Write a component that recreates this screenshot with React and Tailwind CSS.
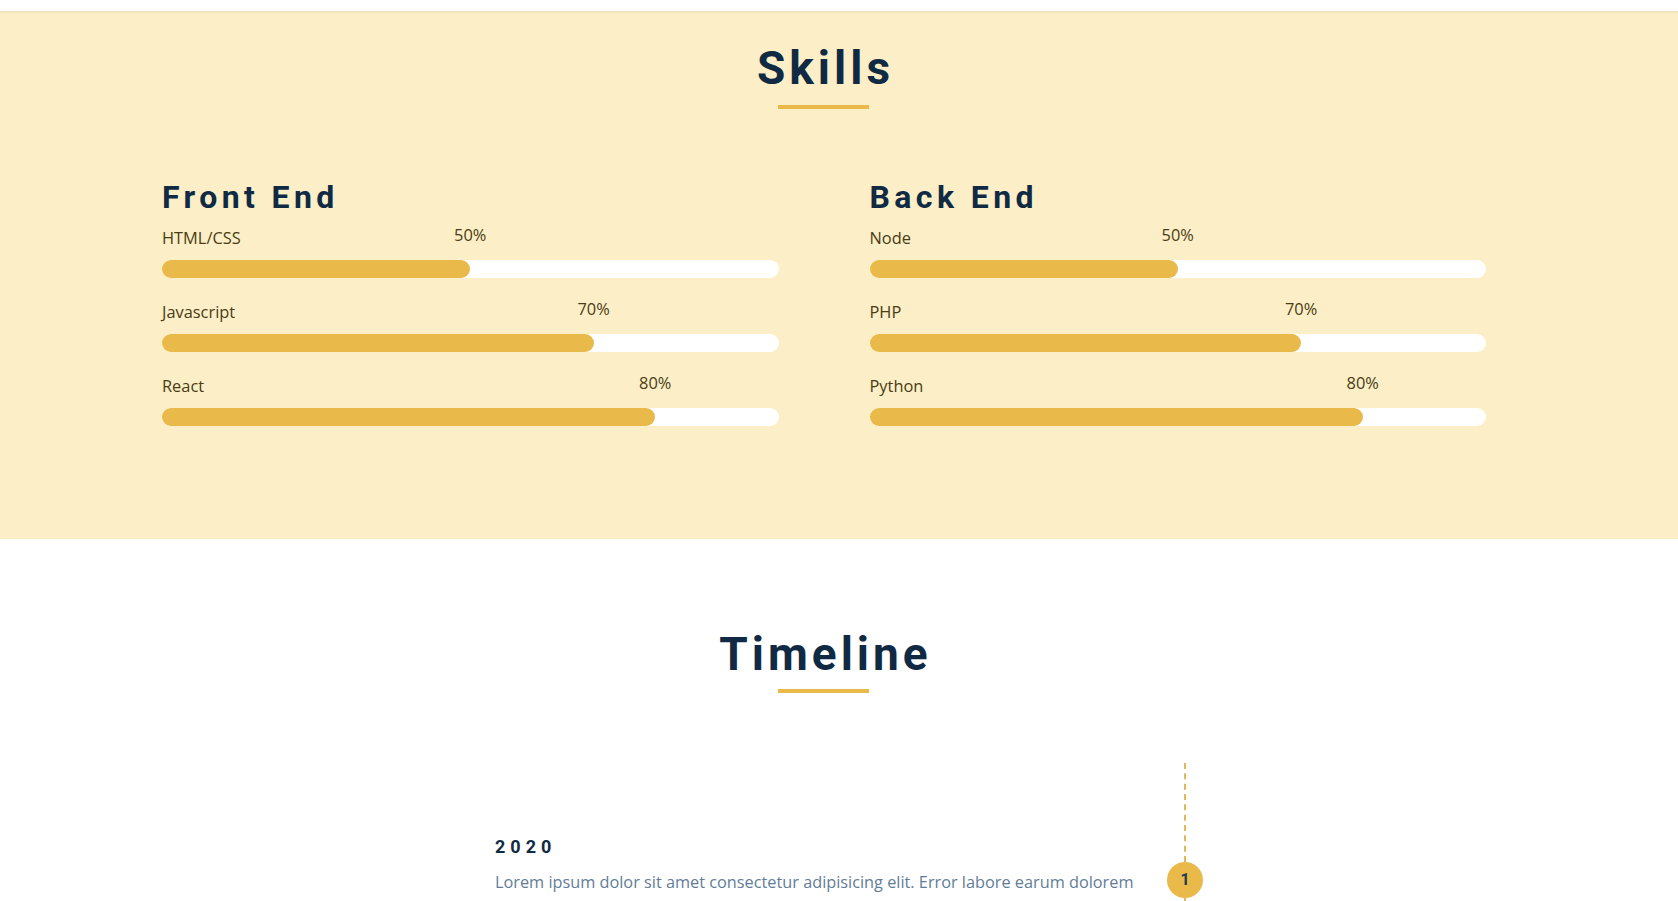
import React from 'react';

const frontEnd = [
  { name: 'HTML/CSS', pct: 50 },
  { name: 'Javascript', pct: 70 },
  { name: 'React', pct: 80 },
];

const backEnd = [
  { name: 'Node', pct: 50 },
  { name: 'PHP', pct: 70 },
  { name: 'Python', pct: 80 },
];

const heading = { fontFamily: 'Roboto, "Liberation Sans", sans-serif' };
const body = { fontFamily: '"Open Sans", "Liberation Sans", sans-serif' };

const SectionTitle = ({ children, gap = 'mt-[14px]' }) => (
  <div className="flex flex-col items-center">
    <h2
      className="text-[46px] leading-[46px] font-bold tracking-[4px] text-[#102a43] pl-[4px]"
      style={heading}
    >
      {children}
    </h2>
    <div className={`${gap} h-[4px] w-[91px] bg-[#e9b949]`} />
  </div>
);

const SkillBar = ({ name, pct }) => (
  <div>
    <div className="relative h-[24px] text-[16.4px] leading-[24px] text-[#4a3c14]" style={body}>
      <span>{name}</span>
      <span
        className="absolute top-[-3px] -translate-x-1/2"
        style={{ left: `${pct}%` }}
      >
        {pct}%
      </span>
    </div>
    <div className="mt-[10px] h-[18px] w-full rounded-full bg-white">
      <div className="h-full rounded-full bg-[#e9b949]" style={{ width: `${pct}%` }} />
    </div>
  </div>
);

const SkillGroup = ({ title, items }) => (
  <div>
    <h3
      className="text-[32px] leading-[32px] font-bold tracking-[4.4px] text-[#102a43]"
      style={heading}
    >
      {title}
    </h3>
    <div className="mt-[13px] flex flex-col gap-[22px]">
      {items.map((s) => (
        <SkillBar key={s.name} {...s} />
      ))}
    </div>
  </div>
);

export default function App() {
  return (
    <div className="min-h-screen w-full bg-white">
      <div className="h-[11px] bg-white" />

      <section className="bg-[#fcefc7] border-t-2 border-[#f3e4bb]">
        <div className="w-[1647px] pt-[32px] pb-[113px]">
          <SectionTitle>Skills</SectionTitle>
          <div className="mt-[72px] grid grid-cols-2 gap-[91px] pl-[162px] pr-[161px]">
            <SkillGroup title="Front End" items={frontEnd} />
            <SkillGroup title="Back End" items={backEnd} />
          </div>
        </div>
      </section>

      <section className="bg-white">
        <div className="w-[1647px] pt-[92px]">
          <SectionTitle gap="mt-[12px]">Timeline</SectionTitle>

          <div className="mt-[70px] flex pl-[495px]">
            <div className="w-[660px] pt-[72px]">
              <h4
                className="text-[18px] leading-[24px] font-bold tracking-[5px] text-[#102a43]"
                style={heading}
              >
                2020
              </h4>
              <p className="mt-[10px] text-[16.3px] leading-[26px] text-[#627d98]" style={body}>
                Lorem ipsum dolor sit amet consectetur adipisicing elit. Error labore earum dolorem
                quibusdam, doloribus quod illum eius vero dolores voluptatem fugiat, impedit
                architecto nam.
              </p>
            </div>
            <div className="ml-[12px] flex w-[36px] flex-col items-center">
              <div className="h-[99px] border-l-2 border-dashed border-[#e4b758]" />
              <div
                className="flex h-[36px] w-[36px] items-center justify-center rounded-full bg-[#e9b949] text-[16px] font-bold text-[#243b53]"
                style={heading}
              >
                1
              </div>
              <div className="h-[60px] border-l-2 border-dashed border-[#e4b758]" />
            </div>
          </div>
        </div>
      </section>
    </div>
  );
}
